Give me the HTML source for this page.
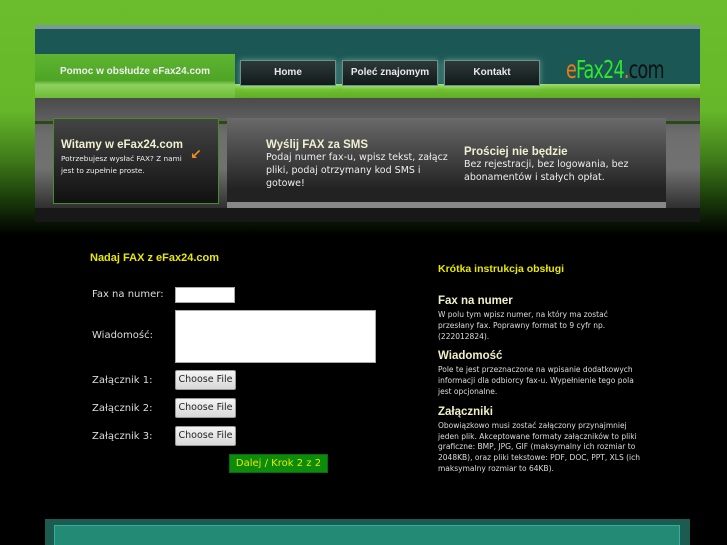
<!DOCTYPE html>
<html><head><meta charset="utf-8"><style>
*{margin:0;padding:0;box-sizing:border-box}
body{width:727px;height:545px;overflow:hidden;position:relative;font-family:"DejaVu Sans","Liberation Sans",sans-serif;
background:linear-gradient(#6bbd2c 0,#66b82a 110px,#3f7a1a 160px,#1a3a0a 200px,#000 235px,#000 100%)}
.a{position:absolute}
.nav{position:absolute;top:60px;height:26px;width:96px;background:linear-gradient(#2c3a38,#121a1a);border:1px solid #6f8f88;box-shadow:0 0 6px rgba(200,255,230,.4);color:#e8e8e8;font:bold 10px "Liberation Sans",sans-serif;text-align:center;line-height:24px}
.y{color:#e8e800;font:bold 11px "Liberation Sans",sans-serif}
.lab{position:absolute;left:92px;color:#ddd;font-size:10px}
.fb{position:absolute;left:175px;width:61px;height:20px;background:linear-gradient(#f4f4f4,#d8d8d8);border:1px solid #999;border-radius:2px;font-size:9.5px;color:#222;text-align:center;line-height:18px}
.h{color:#f0f0c8;font:bold 11.5px "Liberation Sans",sans-serif;margin-top:8px;margin-bottom:3px}
.p{color:#ddd;font-size:7.5px;line-height:10.8px}
</style></head><body>
<div class="a" style="left:35px;top:25px;width:665px;height:4px;background:#7a9a98"></div>
<div class="a" style="left:35px;top:29px;width:665px;height:57px;background:#1b5755"></div>
<div class="a" style="left:35px;top:84px;width:665px;height:14px;background:linear-gradient(#9fdc70,#6fc030 40%,#5eac24)"></div>
<div class="a" style="left:35px;top:54px;width:200px;height:44px;background:linear-gradient(#5fb532,#4ea525 60%,#8fd060 70%,#6bbd34);color:#eee;font:bold 10px 'Liberation Sans',sans-serif;text-align:center;line-height:36px">Pomoc w obsłudze eFax24.com</div>
<div class="nav" style="left:240px">Home</div>
<div class="nav" style="left:342px">Poleć znajomym</div>
<div class="nav" style="left:444px">Kontakt</div>
<div class="a" style="left:566px;top:55px;font:25px 'DejaVu Sans Condensed','Liberation Sans',sans-serif;letter-spacing:-1px;transform:scaleX(.78);transform-origin:0 0;white-space:nowrap"><span style="color:#f07a10">e</span><span style="color:#2ee82e">Fax24</span><span style="color:#f07a10">.</span><span style="color:#111">com</span></div>
<div class="a" style="left:35px;top:98px;width:665px;height:124px;background:linear-gradient(#4a4a4a,#6e6e6e 30%,#777 100%)"></div>
<div class="a" style="left:35px;top:208px;width:665px;height:14px;background:#181818"></div>
<div class="a" style="left:35px;top:168px;width:665px;height:40px;background:linear-gradient(rgba(0,0,0,0),rgba(0,0,0,.6))"></div>
<div class="a" style="left:227px;top:118px;width:439px;height:90px;background:linear-gradient(#6a6a6a,#222 85%);border-bottom:6px solid #888"></div>
<div class="a" style="left:35px;top:121px;width:18px;height:3px;background:#2a4a18"></div>
<div class="a" style="left:666px;top:121px;width:34px;height:3px;background:#2a4a18"></div>
<div class="a" style="left:210px;top:121px;width:17px;height:3px;background:#2a4a18"></div>
<div class="a" style="left:53px;top:118px;width:166px;height:86px;background:linear-gradient(#444,#111);border:1px solid #4a8a28;padding:20px 7px"><div style="color:#f0f0d0;font:bold 11.5px 'Liberation Sans',sans-serif">Witamy w eFax24.com</div><div style="color:#eee;font-size:7.3px;line-height:12px;margin-top:2px">Potrzebujesz wysłać FAX? Z nami<br>jest to zupełnie proste.</div></div>
<div class="a" style="left:190px;top:147px;color:#f09020;font-size:14px;font-weight:bold">↙</div>
<div class="a" style="left:266px;top:139px;width:190px;color:#f0f0d0"><div style="font:bold 11.5px 'Liberation Sans',sans-serif">Wyślij FAX za SMS</div><div style="font-size:9.5px;line-height:13px;color:#eee">Podaj numer fax-u, wpisz tekst, załącz pliki, podaj otrzymany kod SMS i gotowe!</div></div>
<div class="a" style="left:464px;top:146px;width:180px;color:#f0f0d0"><div style="font:bold 11.5px 'Liberation Sans',sans-serif">Prościej nie będzie</div><div style="font-size:9.5px;line-height:13px;color:#eee">Bez rejestracji, bez logowania, bez abonamentów i stałych opłat.</div></div>

<div class="a y" style="left:90px;top:252px">Nadaj FAX z eFax24.com</div>
<div class="lab" style="top:289px">Fax na numer:</div>
<div class="a" style="left:175px;top:287px;width:60px;height:16px;background:#fff;border:1px solid #aaa"></div>
<div class="lab" style="top:330px">Wiadomość:</div>
<div class="a" style="left:175px;top:310px;width:201px;height:53px;background:#fff;border:1px solid #aaa"></div>
<div class="lab" style="top:375px">Załącznik 1:</div><div class="fb" style="top:370px">Choose File</div>
<div class="lab" style="top:403px">Załącznik 2:</div><div class="fb" style="top:398px">Choose File</div>
<div class="lab" style="top:431px">Załącznik 3:</div><div class="fb" style="top:426px">Choose File</div>
<div class="a" style="left:229px;top:454px;width:99px;height:19px;background:#0c8c0c;border:1px solid #0a6a0a;color:#e8e800;font-size:10px;text-align:center;line-height:17px">Dalej / Krok 2 z 2</div>

<div class="a" style="left:438px;top:263px;width:205px">
<div class="y" style="font-size:10.5px">Krótka instrukcja obsługi</div>
<div class="h" style="margin-top:20px">Fax na numer</div>
<div class="p" style="width:180px">W polu tym wpisz numer, na który ma zostać przesłany fax. Poprawny format to 9 cyfr np. (222012824).</div>
<div class="h">Wiadomość</div>
<div class="p" style="width:198px">Pole te jest przeznaczone na wpisanie dodatkowych informacji dla odbiorcy fax-u. Wypełnienie tego pola jest opcjonalne.</div>
<div class="h">Załączniki</div>
<div class="p">Obowiązkowo musi zostać załączony przynajmniej jeden plik. Akceptowane formaty załączników to pliki graficzne: BMP, JPG, GIF (maksymalny ich rozmiar to 2048KB), oraz pliki tekstowe: PDF, DOC, PPT, XLS (ich maksymalny rozmiar to 64KB).</div>
</div>

<div class="a" style="left:45px;top:519px;width:645px;height:26px;background:#1d5a50"></div>
<div class="a" style="left:54px;top:525px;width:626px;height:20px;background:#238a76;border:1px solid #2fb0a0;border-bottom:none"></div>
</body></html>
